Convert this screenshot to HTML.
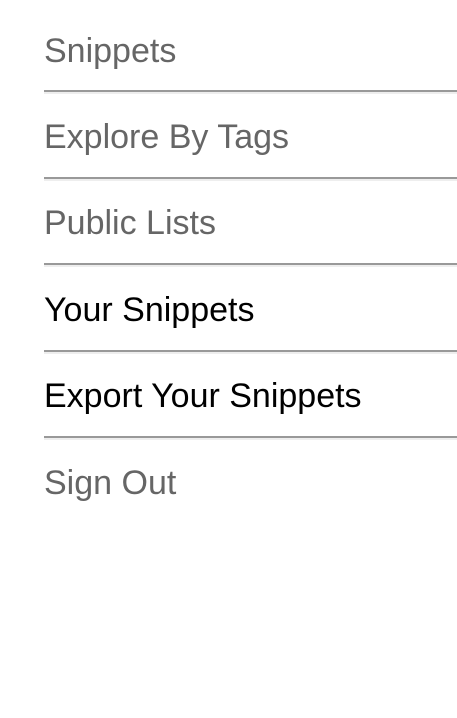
<!DOCTYPE html>
<html><head><style>
body{margin:0;width:457px;height:718px;background:#fff;font-family:"Liberation Sans",Arial,sans-serif;overflow:hidden;position:relative}
.t{position:absolute;left:44px;font-size:34px;line-height:34px;color:#666}
.t.d{color:#000}
.l{position:absolute;left:44px;right:0;height:2px;background:#999;border-bottom:2px solid #eee}
</style></head><body>
<div class="t" style="top:34px">Snippets</div><div class="l" style="top:90px"></div>
<div class="t" style="top:120px">Explore By Tags</div><div class="l" style="top:177px"></div>
<div class="t" style="top:206px">Public Lists</div><div class="l" style="top:263px"></div>
<div class="t d" style="top:293px">Your Snippets</div><div class="l" style="top:350px"></div>
<div class="t d" style="top:379px">Export Your Snippets</div><div class="l" style="top:436px"></div>
<div class="t" style="top:466px">Sign Out</div>
</body></html>
